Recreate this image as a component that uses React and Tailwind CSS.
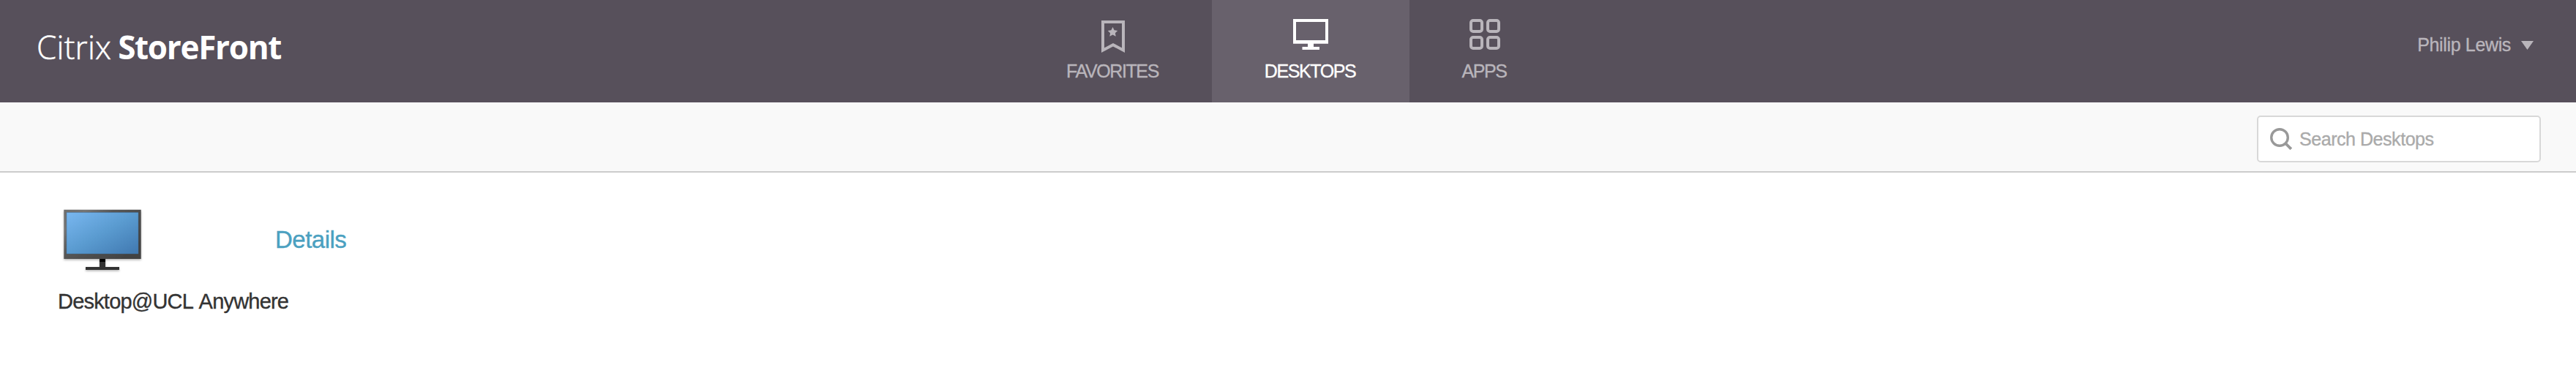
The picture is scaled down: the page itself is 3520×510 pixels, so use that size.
const FONT = "font-['Liberation_Sans',Arial,sans-serif]";

function FavoritesIcon() {
  return (
    <svg className="h-[42px] w-12 overflow-visible" viewBox="0 0 48 42">
      <path d="M10 4H38V42.7L24 35.2L10 42.7Z" fill="none" stroke="currentColor" strokeWidth="4" />
      <path
        d="M23.5 11l2.1 4.3 4.6.6-3.3 3.3.8 4.6-4.2-2.2-4.2 2.2.8-4.6-3.3-3.3 4.6-.6z"
        fill="currentColor"
      />
    </svg>
  );
}

function DesktopIcon() {
  return (
    <svg className="h-[42px] w-12" viewBox="0 0 48 42">
      <path
        fillRule="evenodd"
        d="M0 0H48V33.7H28V38H36V42H12.5V38H20V33.7H0ZM4 4V29H44V4Z"
        fill="currentColor"
      />
    </svg>
  );
}

function AppsIcon() {
  return (
    <svg className="h-[42px] w-[42px]" viewBox="0 0 42 42" fill="none" stroke="currentColor" strokeWidth="4">
      <rect x="2" y="2" width="15" height="15" rx="3" />
      <rect x="25" y="2" width="15" height="15" rx="3" />
      <rect x="2" y="25" width="15" height="15" rx="3" />
      <rect x="25" y="25" width="15" height="15" rx="3" />
    </svg>
  );
}

function MonitorPicture() {
  return (
    <svg className="h-[96px] w-[120px] overflow-visible" viewBox="80 278 120 96">
      <defs>
        <linearGradient id="frame" x1="0" y1="0" x2="1" y2="0.7">
          <stop offset="0" stopColor="#6c6c6c" />
          <stop offset="0.2" stopColor="#747474" />
          <stop offset="0.45" stopColor="#555" />
          <stop offset="1" stopColor="#424242" />
        </linearGradient>
        <linearGradient id="screen" x1="0" y1="0" x2="1" y2="1">
          <stop offset="0" stopColor="#79b7f0" />
          <stop offset="0.5" stopColor="#5a9bd0" />
          <stop offset="1" stopColor="#4078b0" />
        </linearGradient>
        <filter id="shade" x="-20%" y="-20%" width="140%" height="140%">
          <feDropShadow dx="0" dy="1.5" stdDeviation="1.5" floodOpacity="0.3" />
        </filter>
      </defs>
      <g filter="url(#shade)">
        <path d="M136 353h8v12h19v4h-46v-4h19z" fill="#333" />
        <path d="M136 354h8v4h-8z" fill="#000" />
        <path d="M87.3 286.8h105.4v67.2H87.3z" fill="url(#frame)" />
      </g>
      <path d="M91 290.5h98v56.5H91z" fill="url(#screen)" stroke="#3f6f9c" strokeOpacity="0.5" strokeWidth="0.8" />
    </svg>
  );
}

function Tab({ icon, label, active, className }) {
  return (
    <a
      className={`flex h-[140px] flex-col items-center pt-[26px] ${className} ${
        active ? "bg-[#68616c] text-white" : "text-[#b9b5bb]"
      }`}
    >
      {icon}
      <span className="mt-[15px] mr-[2px] text-[25px] leading-[28px] tracking-[-1.4px] [-webkit-text-stroke:0.35px]">
        {label}
      </span>
    </a>
  );
}

export default function App() {
  return (
    <div className={`h-[510px] w-[3520px] overflow-hidden bg-white ${FONT}`}>
      <header className="flex h-[140px] bg-[#57505b]">
        <div className="w-[1386px] pt-[34px] pl-[50px] font-['Open_Sans',sans-serif] text-[44px] leading-[60px] whitespace-nowrap text-white">
          <span className="font-light tracking-[0.2px] [-webkit-text-stroke:0.5px]">Citrix</span>
          <span className="ml-[9px] font-bold tracking-[-1.3px]">StoreFront</span>
        </div>
        <nav className="flex">
          <Tab icon={<FavoritesIcon />} label="FAVORITES" className="w-[270px]" />
          <Tab icon={<DesktopIcon />} label="DESKTOPS" className="w-[270px]" active />
          <Tab icon={<AppsIcon />} label="APPS" className="w-[206px]" />
        </nav>
        <div className="ml-auto flex h-[124px] items-center pr-[58px] text-[#b9b5bb]">
          <span className="-mt-0.5 text-[25px] leading-[28px] tracking-[-0.35px] [-webkit-text-stroke:0.35px]">
            Philip Lewis
          </span>
          <svg className="ml-[14px] h-3 w-[17px]" viewBox="0 0 17 12">
            <path d="M0 0H17L8.5 12Z" fill="currentColor" />
          </svg>
        </div>
      </header>
      <div className="flex h-24 justify-end border-b-2 border-[#ccc] bg-[#f9f9f9] pt-[18px] pr-12">
        <div className="flex h-16 w-[388px] items-center rounded-[5px] border-2 border-[#d8d8d8] bg-white pl-4">
          <svg className="h-[30px] w-[30px]" viewBox="0 0 30 30" fill="none" stroke="#999" strokeWidth="3.4">
            <circle cx="13" cy="13" r="11.3" />
            <path d="M20.5 20.5L28.8 28.8" strokeWidth="3.8" />
          </svg>
          <span className="ml-[10px] text-[25px] leading-[28px] tracking-[-0.45px] text-[#aaa] [-webkit-text-stroke:0.35px]">
            Search Desktops
          </span>
        </div>
      </div>
      <main className="pt-[42px] pl-[79px]">
        <div className="flex h-[96px]">
          <div className="ml-px">
            <MonitorPicture />
          </div>
          <a className="mt-[32px] ml-[176px] text-[33px] leading-[36px] tracking-[-0.5px] text-[#4aa0c0] [-webkit-text-stroke:0.35px]">
            Details
          </a>
        </div>
        <p className="mt-[22px] text-[29px] leading-[32px] tracking-[-0.8px] text-[#333] [-webkit-text-stroke:0.35px] [word-spacing:3px]">
          Desktop@UCL Anywhere
        </p>
      </main>
    </div>
  );
}
